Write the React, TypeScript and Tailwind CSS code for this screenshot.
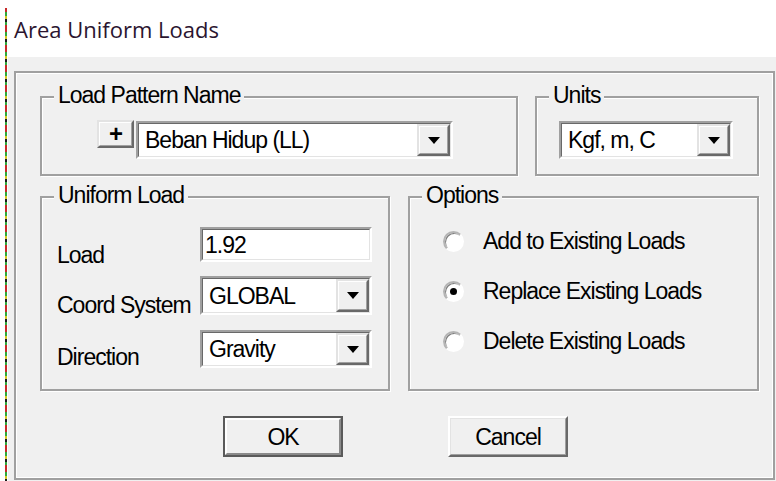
import type { ReactNode } from 'react'

// classic 3D edges, each drawn as an outer and an inner ring
function Sunken({ className, children }: { className: string; children: ReactNode }) {
  return (
    <div className={`border-2 border-t-[#a0a0a0] border-l-[#a0a0a0] border-r-white border-b-white ${className}`}>
      <div className="flex h-full border border-t-[#696969] border-l-[#696969] border-r-[#e3e3e3] border-b-[#e3e3e3] bg-white">
        {children}
      </div>
    </div>
  )
}

function DropButton() {
  return (
    <div className="flex w-[33px] border-2 border-t-[#e3e3e3] border-l-[#e3e3e3] border-r-[#696969] border-b-[#696969]">
      <div className="flex flex-1 items-center justify-center border border-t-white border-l-white border-r-[#a0a0a0] border-b-[#a0a0a0] bg-[#f0f0f0]">
        <svg width="12" height="7" viewBox="0 0 12 7">
          <path d="M0 0h12L6 7z" fill="#000" />
        </svg>
      </div>
    </div>
  )
}

function Combo({ value, className }: { value: string; className: string }) {
  return (
    <Sunken className={className}>
      <span className="flex flex-1 items-center pl-[6px] leading-[26px]">{value}</span>
      <DropButton />
    </Sunken>
  )
}

function Group({ title, className, children }: { title: string; className: string; children?: ReactNode }) {
  return (
    <div className={`relative border-2 border-[#a0a0a0] shadow-[inset_1px_1px_0_#fff,1px_1px_0_#fff] ${className}`}>
      <span className="absolute -top-[16px] left-[12px] bg-[#f0f0f0] px-[4px] leading-[26px]">{title}</span>
      {children}
    </div>
  )
}

function Radio({ label, checked }: { label: string; checked?: boolean }) {
  return (
    <div className="flex h-[26px] items-center gap-[19px]">
      <span className="flex h-[21px] w-[21px] items-center justify-center rounded-full border-2 border-t-[#b4b4b4] border-l-[#b4b4b4] border-r-white border-b-white bg-white shadow-[inset_1px_1px_0_#808080]">
        {checked && <span className="h-[7px] w-[7px] rounded-full bg-black" />}
      </span>
      <span className="leading-[26px]">{label}</span>
    </div>
  )
}

export default function App() {
  return (
    <div className="flex h-[481px] w-[776px] bg-white font-['Liberation_Sans',Arial,sans-serif] text-[23px] tracking-[-1px] text-black">
      <div className="w-[5px]" />
      <div className="mt-[8px] w-[2px] bg-[repeating-linear-gradient(180deg,#c62828_0px,#c62828_4px,#2fa83a_4px,#2fa83a_8px,#d6c526_8px,#d6c526_11px,#1b1b1b_11px,#1b1b1b_14px,#2fa83a_14px,#2fa83a_17px,#c62828_17px,#c62828_20px)]" />

      <div className="flex flex-1 flex-col">
        <div className="h-[57px] pl-[7px] pt-[14px] font-['Open_Sans',sans-serif] text-[22px] leading-[30px] tracking-normal text-[#2b1530]">
          Area Uniform Loads
        </div>

        <div className="ml-[1px] flex-1 bg-[#f0f0f0] pb-[1px] pl-[6px] pr-[1px] pt-[14px]">
          <div className="h-full border-2 border-[#a0a0a0] pl-[24px] pr-[14px] pt-[23px] shadow-[inset_0_0_0_1px_#fff]">
            {/* load pattern + units */}
            <div className="flex h-[80px] gap-[17px]">
              <Group title="Load Pattern Name" className="w-[478px]">
                <div className="flex items-start gap-[2px] pl-[55px] pt-[22px]">
                  <button
                    type="button"
                    className="flex h-[28px] w-[37px] border-2 border-t-[#e3e3e3] border-l-[#e3e3e3] border-r-[#696969] border-b-[#696969]"
                  >
                    <span className="flex flex-1 items-center justify-center border border-t-white border-l-white border-r-[#a0a0a0] border-b-[#a0a0a0] bg-[#f0f0f0] text-[24px] font-bold leading-none">
                      +
                    </span>
                  </button>
                  <Combo value="Beban Hidup (LL)" className="mt-[1px] h-[38px] w-[317px]" />
                </div>
              </Group>
              <Group title="Units" className="w-[224px]">
                <div className="pl-[22px] pt-[23px]">
                  <Combo value="Kgf, m, C" className="h-[38px] w-[174px]" />
                </div>
              </Group>
            </div>

            {/* uniform load + options */}
            <div className="mt-[20px] flex h-[195px] gap-[18px]">
              <Group title="Uniform Load" className="w-[350px]">
                <div className="flex flex-col pl-[15px] pt-[29px]">
                  <div className="flex h-[35px]">
                    <span className="mt-[15px] w-[143px] leading-[26px]">Load</span>
                    <Sunken className="h-[35px] w-[172px]">
                      <span className="flex items-center pl-[2px] leading-[26px]">1.92</span>
                    </Sunken>
                  </div>
                  <div className="mt-[14px] flex h-[39px]">
                    <span className="mt-[16px] w-[143px] leading-[26px]">Coord System</span>
                    <Combo value="GLOBAL" className="h-[39px] w-[172px]" />
                  </div>
                  <div className="mt-[15px] flex h-[38px]">
                    <span className="mt-[14px] w-[143px] leading-[26px]">Direction</span>
                    <Combo value="Gravity" className="h-[38px] w-[172px]" />
                  </div>
                </div>
              </Group>
              <Group title="Options" className="w-[351px]">
                <div className="flex flex-col gap-[24px] pl-[33px] pt-[30px]">
                  <Radio label="Add to Existing Loads" />
                  <Radio label="Replace Existing Loads" checked />
                  <Radio label="Delete Existing Loads" />
                </div>
              </Group>
            </div>

            {/* dialog buttons */}
            <div className="mt-[25px] flex h-[41px] gap-[105px] pl-[183px]">
              <button type="button" className="flex h-[41px] w-[120px] border-2 border-[#5a5a5a]">
                <span className="flex flex-1 items-center justify-center border-2 border-t-white border-l-white border-r-[#8a8a8a] border-b-[#8a8a8a] bg-[#f0f0f0] leading-[26px]">
                  OK
                </span>
              </button>
              <button
                type="button"
                className="flex h-[41px] w-[120px] border-2 border-t-white border-l-white border-r-[#696969] border-b-[#696969]"
              >
                <span className="flex flex-1 items-center justify-center border border-t-[#e3e3e3] border-l-[#e3e3e3] border-r-[#a0a0a0] border-b-[#a0a0a0] bg-[#f0f0f0] leading-[26px]">
                  Cancel
                </span>
              </button>
            </div>
          </div>
        </div>
      </div>
    </div>
  )
}
